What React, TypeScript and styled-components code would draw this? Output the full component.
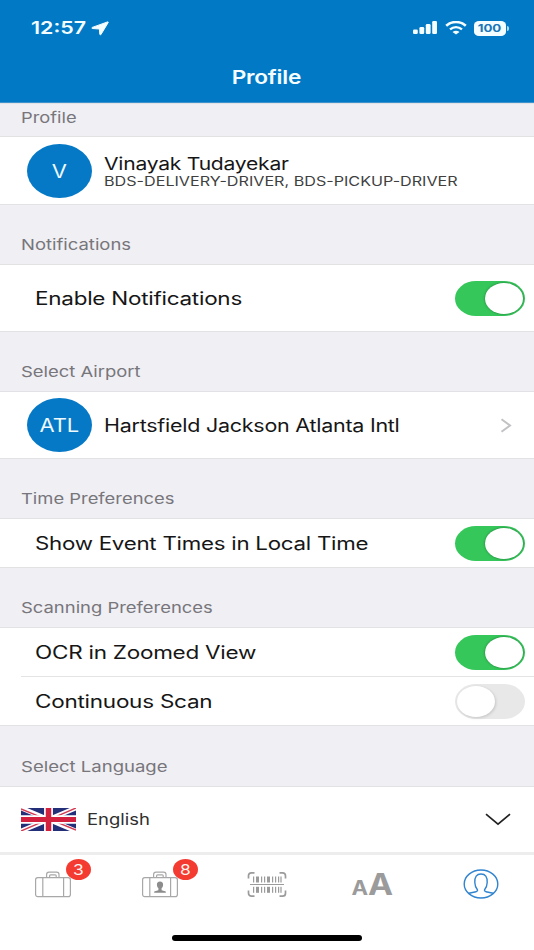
import React from 'react';
import styled, { createGlobalStyle } from 'styled-components';

const GlobalStyle = createGlobalStyle`
  * { box-sizing: border-box; }
  body { margin: 0; background: #fff; font-family: Inter, "Liberation Sans", sans-serif; }
`;

const Screen = styled.main`
  display: flex;
  flex-direction: column;
  width: 534px;
  height: 950px;
  overflow: hidden;
  background: #fff;
`;

const Header = styled.header`
  flex: none;
  height: 103px;
  background: #0279c5;
  border-bottom: 1px solid #3c93cd;
  color: #f4fdff;
`;

const StatusBar = styled.div`
  display: flex;
  align-items: center;
  height: 56px;
  padding: 0 25px 0 31px;
`;

const Clock = styled.span`
  width: 60px;
  font-size: 17.5px;
  font-weight: 600;
  line-height: 20px;
  transform: scaleX(1.225);
  transform-origin: left;
`;

const StatusIcons = styled.div`
  display: flex;
  align-items: center;
  gap: 7px;
  margin-left: auto;
`;

const Battery = styled.span`
  display: flex;
  align-items: center;
  justify-content: center;
  width: 32px;
  height: 15px;
  border-radius: 5px / 4px;
  background: #f4fdff;
  color: #1976b8;
`;

const BatteryLevel = styled.span`
  font-size: 10.7px;
  font-weight: 700;
  line-height: 15px;
  transform: scaleX(1.24);
`;

const BatteryTip = styled.span`
  width: 2px;
  height: 5px;
  margin-left: -6px;
  border-radius: 0 2px 2px 0;
  background: #b5dcf2;
`;

const Title = styled.h1`
  margin: 10px 0 0;
  padding-right: 1px;
  font-size: 19px;
  font-weight: 600;
  letter-spacing: -0.2px;
  line-height: 24px;
  text-align: center;
  transform: scaleX(1.19);
`;

const SectionHeader = styled.h2<{ $h?: number; $bottom?: number }>`
  display: flex;
  flex: none;
  align-items: flex-end;
  height: ${(p) => p.$h ?? 61}px;
  margin: 0;
  padding: 0 0 ${(p) => p.$bottom ?? 9}px 21px;
  border: solid #e2e2e5;
  border-width: 1px 0;
  background: #f0eff4;
`;

const Label = styled.span<{ $x: number }>`
  color: #77767b;
  font-size: 15px;
  font-weight: 400;
  line-height: 20px;
  white-space: nowrap;
  transform: scaleX(${(p) => p.$x});
  transform-origin: left;
`;

const Row = styled.div<{ $h: number; $left?: number; $right?: number }>`
  display: flex;
  flex: none;
  align-items: center;
  height: ${(p) => p.$h}px;
  padding: 0 ${(p) => p.$right ?? 9}px 0 ${(p) => p.$left ?? 35}px;
  background: #fff;
`;

const Divider = styled.div`
  flex: none;
  height: 1px;
  margin-left: 21px;
  background: #e4e4e6;
`;

const RowText = styled.span<{ $x: number }>`
  margin-right: auto;
  padding-top: 1px;
  color: #161616;
  font-size: 18px;
  letter-spacing: -0.2px;
  line-height: 22px;
  white-space: nowrap;
  transform: scaleX(${(p) => p.$x});
  transform-origin: left;
`;

const Avatar = styled.span`
  display: flex;
  flex: none;
  align-items: center;
  justify-content: center;
  width: 65px;
  height: 54px;
  margin-right: 11.6px;
  border-radius: 50%;
  background: #0579c6;
  color: #eefaff;
`;

const Initials = styled.span`
  padding-top: 2px;
  font-size: 18px;
  line-height: 22px;
  transform: scaleX(1.22);
`;

const Person = styled.div`
  display: flex;
  flex-direction: column;
  align-items: flex-start;
`;

const PersonName = styled.span`
  color: #161616;
  font-size: 17.5px;
  letter-spacing: -0.2px;
  line-height: 21px;
  white-space: nowrap;
  transform: scaleX(1.205);
  transform-origin: left;
`;

const Roles = styled.span`
  margin-top: -1px;
  color: #3f3f3f;
  font-size: 13.2px;
  line-height: 16px;
  white-space: nowrap;
  transform: scaleX(1.225);
  transform-origin: left;
`;

const Switch = styled.button<{ $on: boolean }>`
  display: flex;
  flex: none;
  align-items: center;
  justify-content: ${(p) => (p.$on ? 'flex-end' : 'flex-start')};
  width: 70px;
  height: 35px;
  padding: 0 2px;
  border: 0;
  border-radius: 21px / 17.5px;
  background: ${(p) => (p.$on ? '#35c75a' : '#e8e8e8')};
`;

const Knob = styled.span<{ $on: boolean }>`
  width: 38px;
  height: 31px;
  border-radius: 50%;
  background: #fff;
  box-shadow: ${(p) => (p.$on ? '0 0 2px 0.5px rgba(30, 90, 50, 0.5)' : '1px 1px 3px 0 rgba(0, 0, 0, 0.15)')};
`;

const Flag = styled.svg`
  flex: none;
  margin-right: 11px;
`;

const LanguageName = styled.span`
  margin-right: auto;
  color: #303030;
  font-size: 15.5px;
  line-height: 20px;
  transform: scaleX(1.19);
  transform-origin: left;
`;

const TabBar = styled.nav`
  display: grid;
  flex: none;
  grid-template-columns: repeat(5, 1fr);
  height: 64px;
  border-top: 3px solid #ededee;
`;

const Tab = styled.a`
  position: relative;
  display: flex;
  align-items: flex-start;
  justify-content: center;
  padding-top: 14px;
`;

const Badge = styled.span`
  position: absolute;
  top: 4px;
  left: calc(50% + 13px);
  display: flex;
  align-items: center;
  justify-content: center;
  width: 25px;
  height: 21px;
  border-radius: 50%;
  background: #f43b31;
  color: #fff4f0;
`;

const BadgeCount = styled.span`
  font-size: 14.5px;
  line-height: 21px;
  transform: scaleX(1.2);
`;

const HomeArea = styled.footer`
  display: flex;
  justify-content: center;
  padding-top: 19px;
`;

const HomeIndicator = styled.span`
  width: 190px;
  height: 6px;
  border-radius: 3px;
  background: #000;
`;

const Toggle = ({ on }: { on: boolean }) => (
  <Switch $on={on} role="switch" aria-checked={on}>
    <Knob $on={on} />
  </Switch>
);

const Suitcase = ({ person }: { person?: boolean }) => (
  <svg width="38" height="30" viewBox="0 -2 38 30" fill="none" stroke="#a8a8a8" strokeWidth="1.2">
    <rect x="1.6" y="6.6" width="34.8" height="19" rx="2.2" />
    <path d="M8.800 6.600v19M29.600 6.600v19M12.600 6.600V3.600a2.400 2.400 0 0 1 2.400-2.400h7.600A2.400 2.400 0 0 1 25 3.600v3M15.600 6.600V4.800a1 1 0 0 1 1-1h4.600a1 1 0 0 1 1 1v1.800" />
    {person && (
      <path
        d="M19 10.500c2.200 0 3.200 1.400 3.100 3.400-.1 1.600-.8 2.600-1.500 3.200v2.200l4.200 1.200v1.300H13.200v-1.300l4.200-1.200v-2.200c-.7-.6-1.400-1.600-1.500-3.200-.1-2 .9-3.400 3.100-3.400z"
        fill="#8c8c8c"
        stroke="none"
      />
    )}
  </svg>
);

const bars: [number, number][] = [
  [6, 1.2], [9, 3], [14, 1.2], [17, 1.2], [20, 3], [25, 1.2], [28, 1.2], [31, 1.2], [33.4, 1.2],
];

const Barcode = () => (
  <svg width="40" height="30" viewBox="0 -2 40 30" fill="none" stroke="#9b9b9b">
    <path
      d="M1.500 7.500V4.800a3 3 0 0 1 3-3h3M32.500 1.800h3a3 3 0 0 1 3 3v2.700M38.500 19.500v2.700a3 3 0 0 1-3 3h-3M7.500 25.200h-3a3 3 0 0 1-3-3v-2.700"
      strokeWidth="1.700"
    />
    <path d="M3 13.500h34" strokeWidth="1.200" />
    <g fill="#9b9b9b" stroke="none">
      {bars.map(([x, w]) => (
        <React.Fragment key={x}>
          <rect x={x} y="5.500" width={w} height="6" />
          <rect x={x} y="15.800" width={w} height="6" />
        </React.Fragment>
      ))}
    </g>
  </svg>
);

const LetterPair = styled.span`
  display: flex;
  align-items: baseline;
  height: 36px;
  margin: -3px 2px 0 0;
  color: #9b9b9b;
  font-weight: 700;
  line-height: 36px;
  transform: scaleX(1.14);
`;

const SmallLetter = styled.span`
  font-size: 19.5px;
`;

const LargeLetter = styled.span`
  font-size: 29.5px;
`;

const ProfileIcon = () => (
  <svg width="36" height="30" viewBox="0 0 36 30" fill="none" stroke="#3184cf" strokeWidth="1.400">
    <ellipse cx="18" cy="15" rx="16.800" ry="14" />
    <path d="M5.800 24.200l7.200-1.500c1.300-.3 1.800-1 1.400-2-1.600-1.900-2.500-4.200-2.600-7.200C11.600 7.800 13.600 5 18 5s6.400 2.800 6.200 8.500c-.1 3-1 5.300-2.600 7.200-.4 1 .1 1.700 1.400 2l7.200 1.500" />
  </svg>
);

const Signal = () => (
  <svg width="25" height="14" viewBox="0 0 25 14" fill="#f4fdff">
    <rect x="0" y="8.500" width="4.800" height="4.500" rx="1.300" />
    <rect x="6.400" y="6" width="4.800" height="7" rx="1.300" />
    <rect x="12.800" y="3" width="4.800" height="10" rx="1.300" />
    <rect x="19.200" y="0" width="4.800" height="13" rx="1.300" />
  </svg>
);

const Wifi = () => (
  <svg width="22" height="14" viewBox="0 0 22 14" fill="none" stroke="#f4fdff">
    <path d="M1.200 4.800C6.800-.2 15.200-.2 20.800 4.800" strokeWidth="2.600" />
    <path d="M5 8.400c3.600-3 8.400-3 12 0" strokeWidth="2.400" />
    <path d="M11 13.600L7.500 10.900c2-1.500 5-1.500 7 0z" fill="#f4fdff" stroke="none" />
  </svg>
);

const UnionFlag = () => (
  <Flag width="55" height="23" viewBox="0 0 56 24" preserveAspectRatio="none">
    <path fill="#242f79" d="M0 0h56v24H0z" />
    <path d="M0 0l56 24M56 0L0 24" stroke="#fff" strokeWidth="5" />
    <path d="M0 1l24 10M56 0L32 10.500M0 24l24-10.500M56 23L32 13" stroke="#d33a52" strokeWidth="1.500" />
    <path d="M28 0v24M0 12h56" stroke="#fff" strokeWidth="9" />
    <path d="M28 0v24" stroke="#d2203e" strokeWidth="5.600" />
    <path d="M0 12h56" stroke="#d2203e" strokeWidth="5" />
  </Flag>
);

export default function App() {
  return (
    <Screen>
      <GlobalStyle />
      <Header>
        <StatusBar>
          <Clock>12:57</Clock>
          <svg width="18" height="15" viewBox="0 0 18 15" fill="#f4fdff" stroke="#f4fdff" strokeWidth="1" strokeLinejoin="round">
            <path d="M16.600.9L1.300 6.400c-.7.300-.5 1.100.1 1.100l7 .5.4 5.300c.1.700.9.700 1.200.1L17.200 1.500c.2-.4-.2-.8-.6-.6z" />
          </svg>
          <StatusIcons>
            <Signal />
            <Wifi />
            <Battery><BatteryLevel>100</BatteryLevel></Battery>
            <BatteryTip />
          </StatusIcons>
        </StatusBar>
        <Title>Profile</Title>
      </Header>

      <SectionHeader $h={34} $bottom={8}><Label $x={1.22}>Profile</Label></SectionHeader>
      <Row $h={67} $left={27}>
        <Avatar><Initials>V</Initials></Avatar>
        <Person>
          <PersonName>Vinayak Tudayekar</PersonName>
          <Roles>BDS-DELIVERY-DRIVER, BDS-PICKUP-DRIVER</Roles>
        </Person>
      </Row>

      <SectionHeader><Label $x={1.23}>Notifications</Label></SectionHeader>
      <Row $h={66}>
        <RowText $x={1.248}>Enable Notifications</RowText>
        <Toggle on />
      </Row>

      <SectionHeader><Label $x={1.228}>Select Airport</Label></SectionHeader>
      <Row $h={66} $left={27} $right={22}>
        <Avatar><Initials>ATL</Initials></Avatar>
        <RowText $x={1.192}>Hartsfield Jackson Atlanta Intl</RowText>
        <svg width="12" height="15" viewBox="0 0 12 15" fill="none" stroke="#c2c2c5" strokeWidth="2">
          <path d="M1.500 1.200l8.500 6.300-8.500 6.300" />
        </svg>
      </Row>

      <SectionHeader><Label $x={1.225}>Time Preferences</Label></SectionHeader>
      <Row $h={48}>
        <RowText $x={1.238}>Show Event Times in Local Time</RowText>
        <Toggle on />
      </Row>

      <SectionHeader><Label $x={1.228}>Scanning Preferences</Label></SectionHeader>
      <Row $h={48}>
        <RowText $x={1.25}>OCR in Zoomed View</RowText>
        <Toggle on />
      </Row>
      <Divider />
      <Row $h={48}>
        <RowText $x={1.25}>Continuous Scan</RowText>
        <Toggle on={false} />
      </Row>

      <SectionHeader $h={62}><Label $x={1.235}>Select Language</Label></SectionHeader>
      <Row $h={65} $left={21} $right={23}>
        <UnionFlag />
        <LanguageName>English</LanguageName>
        <svg width="26" height="13" viewBox="0 0 26 13" fill="none" stroke="#222" strokeWidth="1.700">
          <path d="M1 1.200l12 10 12-10" />
        </svg>
      </Row>

      <TabBar>
        <Tab><Suitcase /><Badge><BadgeCount>3</BadgeCount></Badge></Tab>
        <Tab><Suitcase person /><Badge><BadgeCount>8</BadgeCount></Badge></Tab>
        <Tab><Barcode /></Tab>
        <Tab><LetterPair><SmallLetter>A</SmallLetter><LargeLetter>A</LargeLetter></LetterPair></Tab>
        <Tab><ProfileIcon /></Tab>
      </TabBar>
      <HomeArea><HomeIndicator /></HomeArea>
    </Screen>
  );
}
